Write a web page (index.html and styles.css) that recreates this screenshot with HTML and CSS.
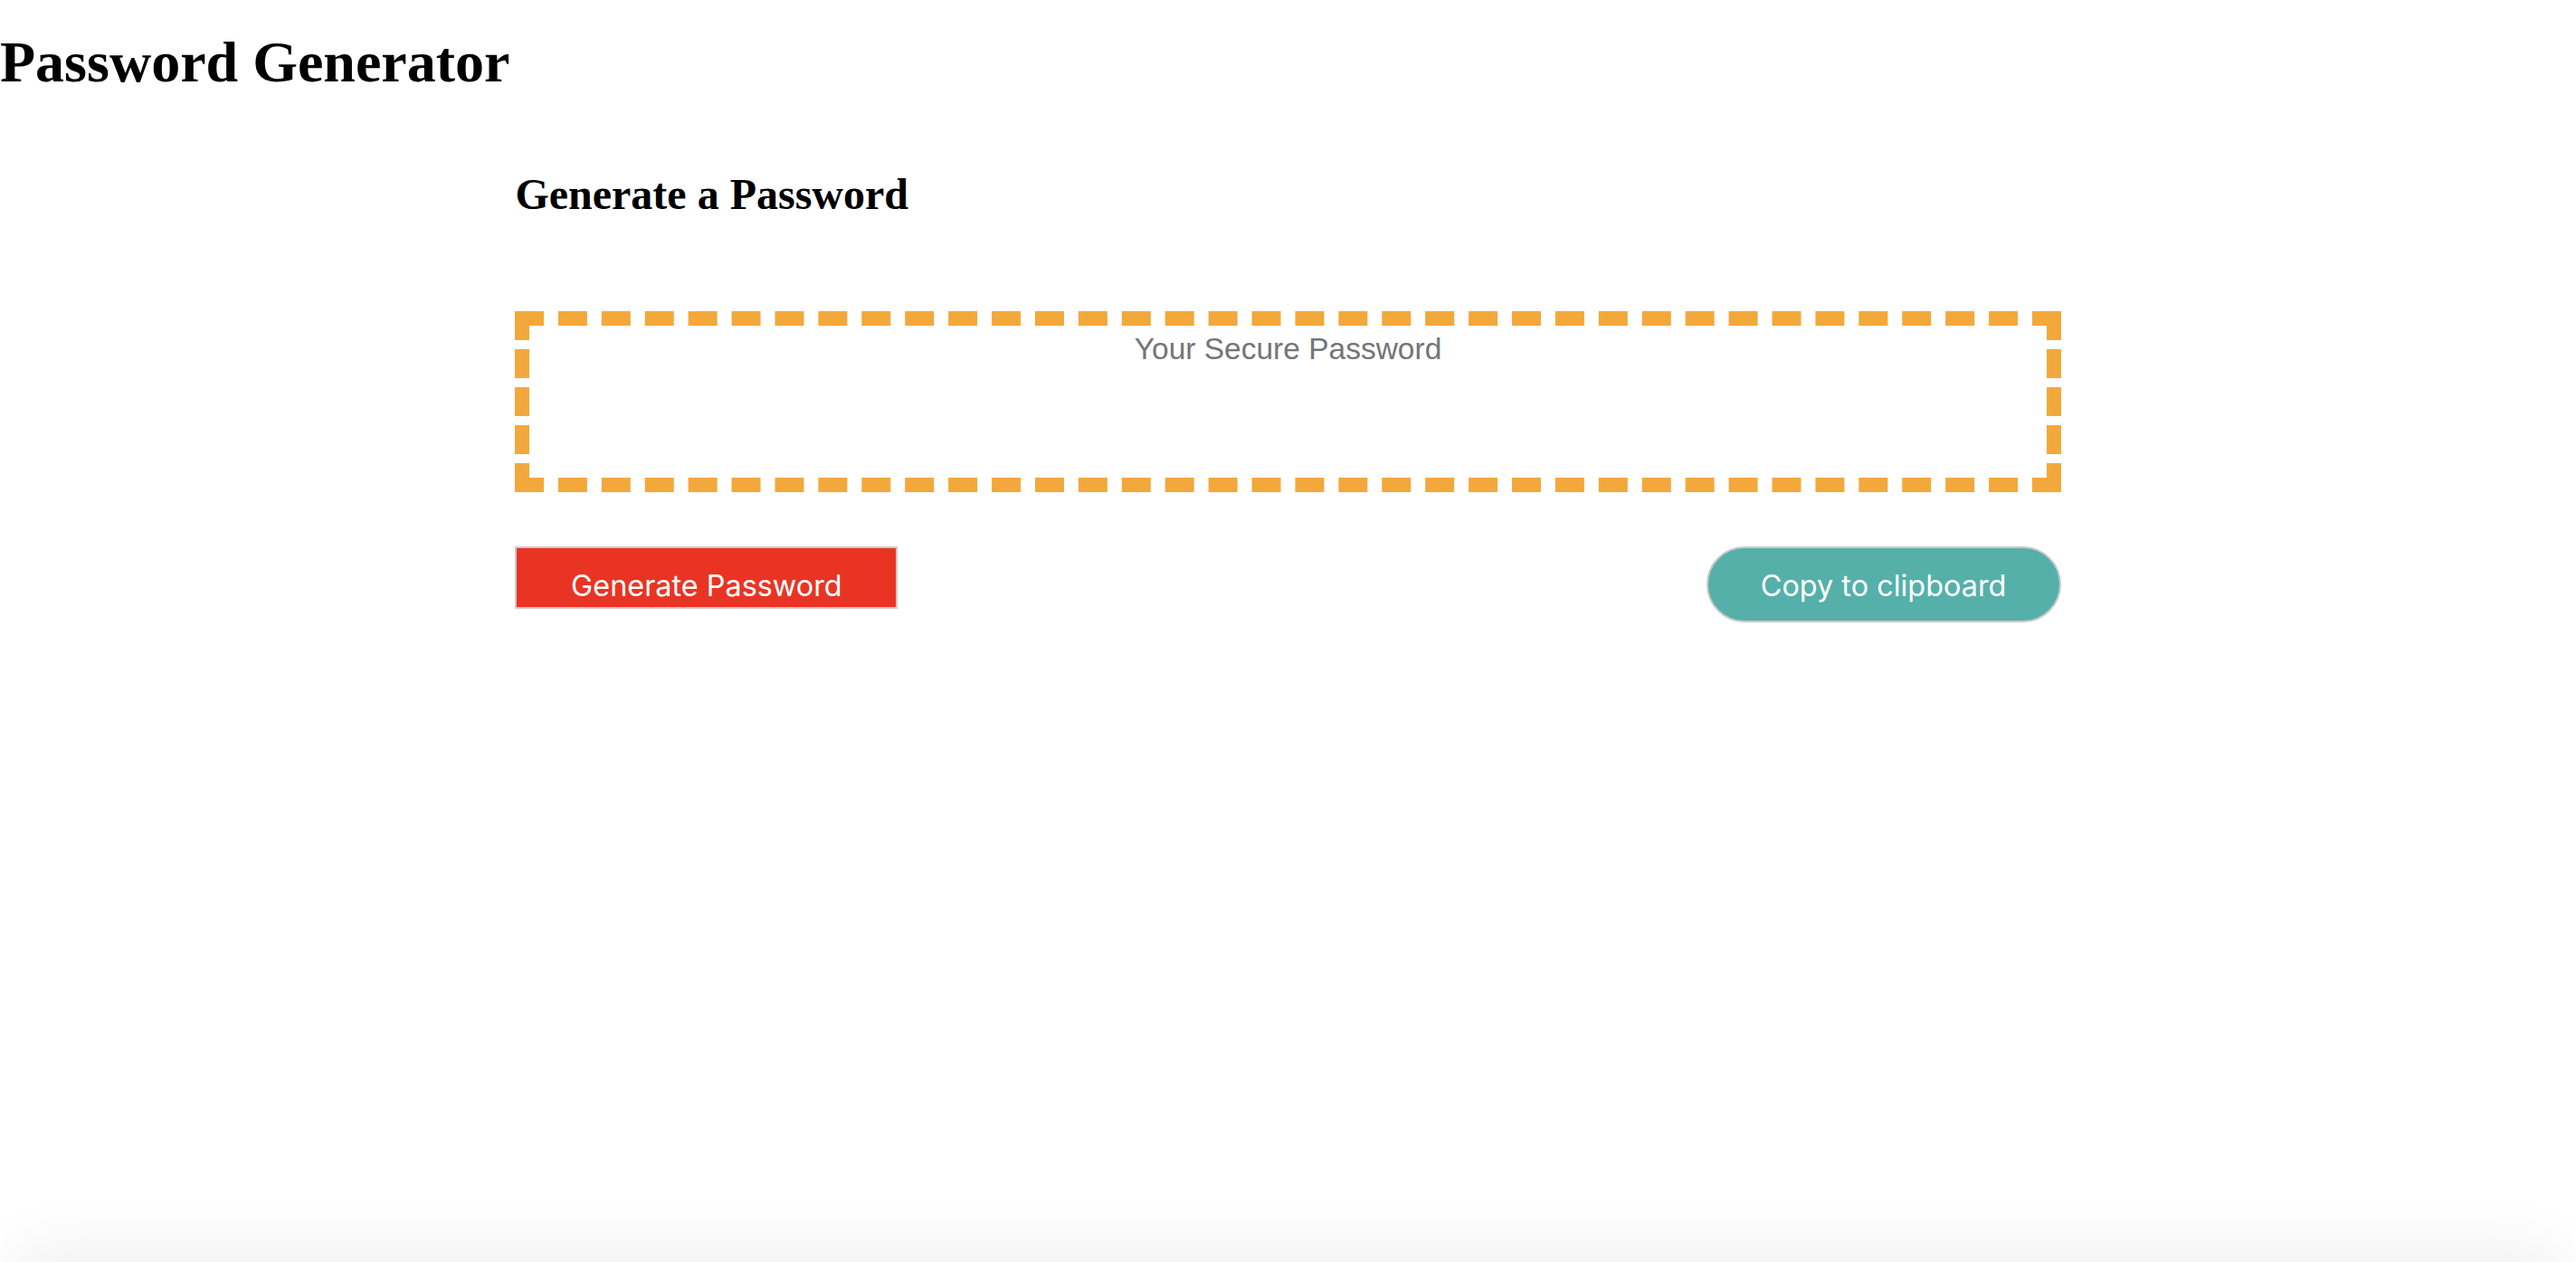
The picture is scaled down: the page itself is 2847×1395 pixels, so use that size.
FILE: index.html
```html
<!DOCTYPE html>
<html lang="en">
<head>
<meta charset="utf-8">
<title>Password Generator</title>
<link rel="stylesheet" href="styles.css">
</head>
<body>
  <header class="page-header">
    <h1 class="page-title">Password Generator</h1>
  </header>
  <main class="card">
    <h2 class="card-title">Generate a Password</h2>
    <div class="password-output">
      <span class="password-placeholder">Your Secure Password</span>
    </div>
    <div class="actions">
      <button class="btn btn-generate" type="button">Generate Password</button>
      <button class="btn btn-copy" type="button">Copy to clipboard</button>
    </div>
  </main>
  <div class="bottom-shade"></div>
</body>
</html>
```

FILE: styles.css
```css
html, body {
  margin: 0;
  padding: 0;
  background: #ffffff;
}

body {
  font-family: "Liberation Serif", "Times New Roman", serif;
  color: #000;
  min-height: 100vh;
  overflow: hidden;
}

.page-title {
  margin: 32px 0 0 0;
  font-size: 64px;
  line-height: 1.15;
  font-weight: bold;
}

.card {
  width: 60%;
  margin: 0 auto;
}

.card-title {
  margin: 81px 0 0 0;
  font-size: 48px;
  line-height: 1.15;
  font-weight: bold;
}

.password-output {
  box-sizing: border-box;
  margin-top: 102px;
  height: 200px;
  border: 16px dashed #f3a83c;
  display: flex;
  justify-content: center;
  align-items: flex-start;
  padding-top: 7px;
}

.password-placeholder {
  font-family: "Liberation Sans", Arial, sans-serif;
  font-size: 33.5px;
  line-height: 1.15;
  color: #757575;
}

.actions {
  margin-top: 60px;
  display: flex;
  justify-content: space-between;
  align-items: flex-start;
}

.btn {
  box-sizing: border-box;
  font-family: Inter, "Liberation Sans", sans-serif;
  font-size: 32.4px;
  line-height: 40px;
  color: #ffffff;
  border: 2px solid #c9c9c9;
  margin: 0;
  cursor: pointer;
  text-align: center;
}

.btn-generate {
  width: 423px;
  padding: 22px 0 3px 0;
  background: #e93424;
  border-radius: 0;
}

.btn-copy {
  width: 392px;
  padding: 22px 0 18px 0;
  background: #55b0aa;
  border-radius: 42px;
}

.bottom-shade {
  position: fixed;
  left: 24px;
  right: 24px;
  bottom: -60px;
  height: 60px;
  box-shadow: 0 0 70px 10px rgba(0, 0, 0, 0.07);
}
```
